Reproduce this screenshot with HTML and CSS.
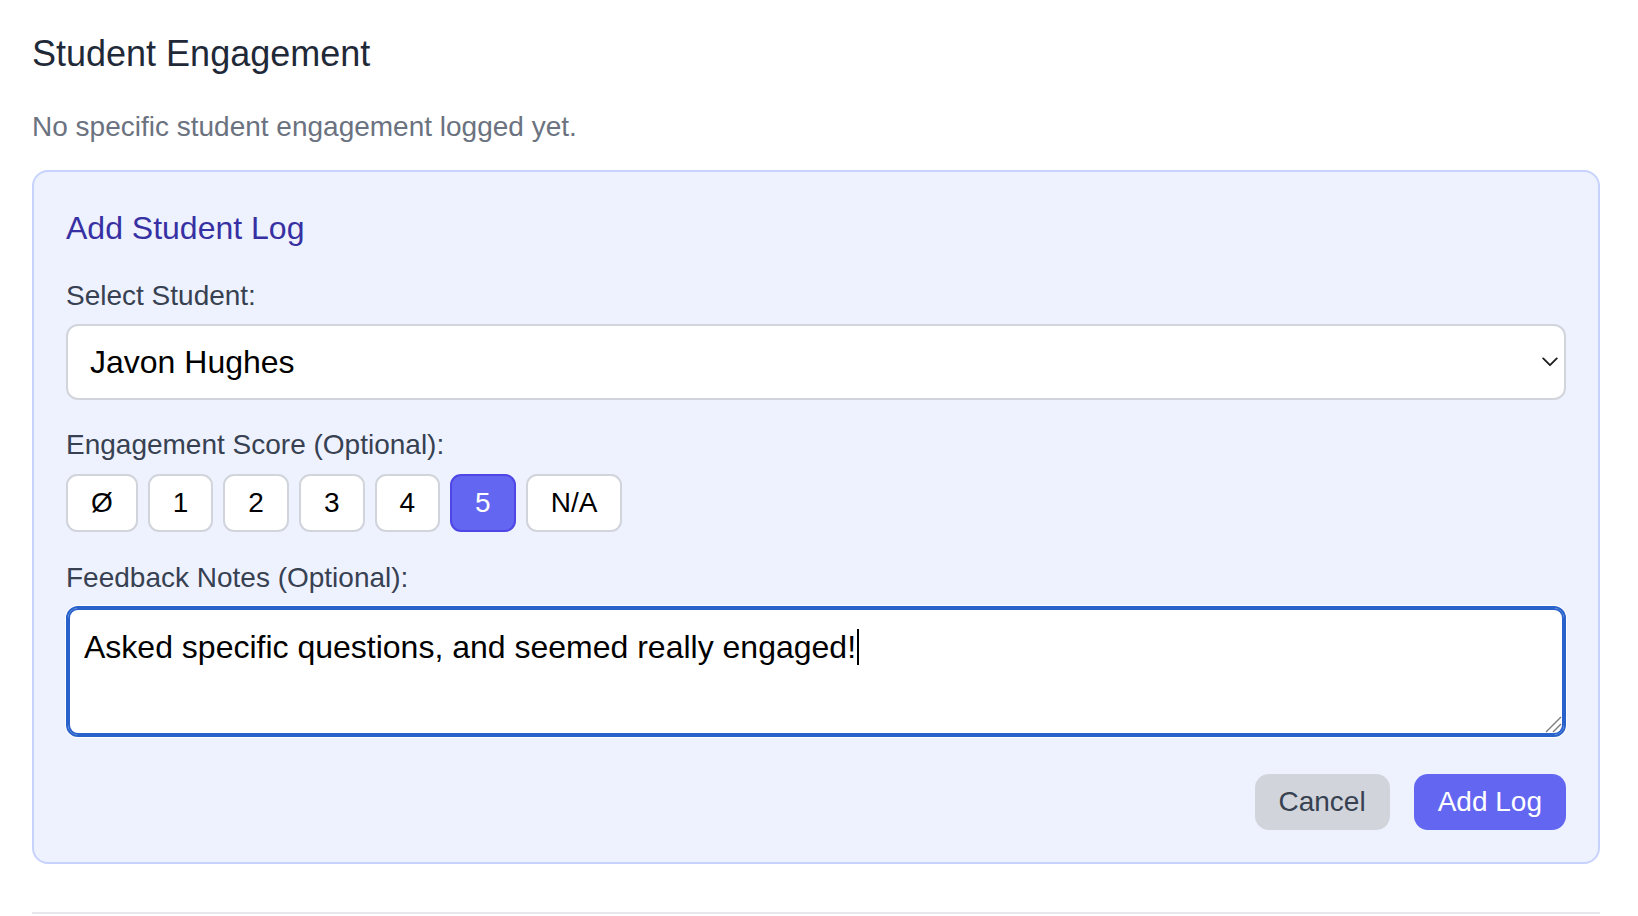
FILE: index.html
```html
<!DOCTYPE html>
<html lang="en">
<head>
<meta charset="utf-8">
<title>Student Engagement</title>
<link rel="stylesheet" href="styles.css">
</head>
<body>
<main class="page">
  <section class="engagement">
    <h2 class="section-title">Student Engagement</h2>
    <p class="empty-note">No specific student engagement logged yet.</p>
    <form class="log-card">
      <h3 class="card-title">Add Student Log</h3>
      <div class="field">
        <label class="field-label" for="student">Select Student:</label>
        <div class="select-wrap">
          <select id="student" class="select">
            <option>Javon Hughes</option>
          </select>
          <svg class="chevron" viewBox="0 0 16 10" aria-hidden="true"><path d="M1.2 1.4 L8 8.2 L14.8 1.4" fill="none" stroke="#1c1c1c" stroke-width="1.8" stroke-linecap="round" stroke-linejoin="round"/></svg>
        </div>
      </div>
      <div class="field field-score">
        <span class="field-label">Engagement Score (Optional):</span>
        <div class="score-options">
          <button type="button" class="score-btn">Ø</button>
          <button type="button" class="score-btn">1</button>
          <button type="button" class="score-btn">2</button>
          <button type="button" class="score-btn">3</button>
          <button type="button" class="score-btn">4</button>
          <button type="button" class="score-btn is-selected">5</button>
          <button type="button" class="score-btn">N/A</button>
        </div>
      </div>
      <div class="field field-notes">
        <span class="field-label">Feedback Notes (Optional):</span>
        <div class="notes" role="textbox" aria-multiline="true">Asked specific questions, and seemed really engaged!<span class="caret"></span>
          <svg class="resize-grip" viewBox="0 0 18 18" aria-hidden="true"><path d="M2 17 L17 2 M9 17 L17 9" stroke="#7c7c7c" stroke-width="1.4" fill="none"/></svg>
        </div>
      </div>
      <div class="actions">
        <button type="button" class="btn btn-cancel">Cancel</button>
        <button type="button" class="btn btn-primary">Add Log</button>
      </div>
    </form>
  </section>
  <div class="divider"></div>
</main>
</body>
</html>
```

FILE: styles.css
```css
* { box-sizing: border-box; }
html, body { margin: 0; background: #fff; overflow: hidden; }
body { font-family: "Liberation Sans", Arial, Helvetica, sans-serif; }

.page { padding: 26px 38px 0 32px; }

.section-title {
  margin: 0 0 25px;
  font-size: 36px;
  line-height: 56px;
  font-weight: 400;
  color: #1f2937;
}
.empty-note {
  margin: 0 0 23px;
  font-size: 28px;
  line-height: 40px;
  color: #6b7280;
}

.log-card {
  background: #eef2ff;
  border: 2px solid #c7d2fe;
  border-radius: 16px;
  padding: 32px;
}
.card-title {
  margin: 0 0 24px;
  font-size: 32px;
  line-height: 48px;
  font-weight: 400;
  color: #3730a3;
}

.field-label {
  display: block;
  font-size: 28px;
  line-height: 40px;
  color: #374151;
  margin-bottom: 8px;
}
.field-score { margin-top: 25px; }
.field-score .field-label { margin-bottom: 9px; }
.field-notes { margin-top: 26px; }

.select-wrap { position: relative; }
.select {
  -webkit-appearance: none;
  appearance: none;
  display: block;
  width: 100%;
  height: 76px;
  padding: 0 48px 0 22px;
  font-family: inherit;
  font-size: 32px;
  color: #000;
  background: #fff;
  border: 2px solid #d1d5db;
  border-radius: 12px;
  outline: none;
}
.chevron {
  position: absolute;
  right: 8px;
  top: 33px;
  width: 16px;
  height: 10px;
  pointer-events: none;
}

.score-options { display: flex; gap: 10px; }
.score-btn {
  font-family: inherit;
  font-size: 28px;
  line-height: 40px;
  padding: 7px 23px;
  border: 2px solid #d1d5db;
  border-radius: 11px;
  background: #fff;
  color: #000;
}
.score-btn.is-selected {
  background: #6366f1;
  border-color: #4f46e5;
  color: #fff;
}

.notes {
  position: relative;
  height: 131px;
  background: #fff;
  border: 2px solid #2a62cc;
  box-shadow: inset 0 0 0 2px #2a62cc, 0 0 0 1px #fff;
  border-radius: 12px;
  padding: 15px 16px 16px;
  font-size: 32px;
  line-height: 48px;
  color: #000;
}
.caret {
  display: inline-block;
  width: 2px;
  height: 36px;
  margin-left: 1px;
  background: #000;
  vertical-align: -7px;
}
.resize-grip {
  position: absolute;
  right: 2px;
  bottom: 2px;
  width: 18px;
  height: 18px;
}

.actions {
  display: flex;
  justify-content: flex-end;
  gap: 24px;
  margin-top: 37px;
}
.btn {
  font-family: inherit;
  font-size: 28px;
  line-height: 40px;
  padding: 8px 24px;
  border: 0;
  border-radius: 14px;
}
.btn-cancel { background: #d1d5db; color: #374151; }
.btn-primary { background: #6366f1; color: #fff; }

.divider {
  margin-top: 48px;
  border-top: 2px solid #e5e7eb;
}
```
